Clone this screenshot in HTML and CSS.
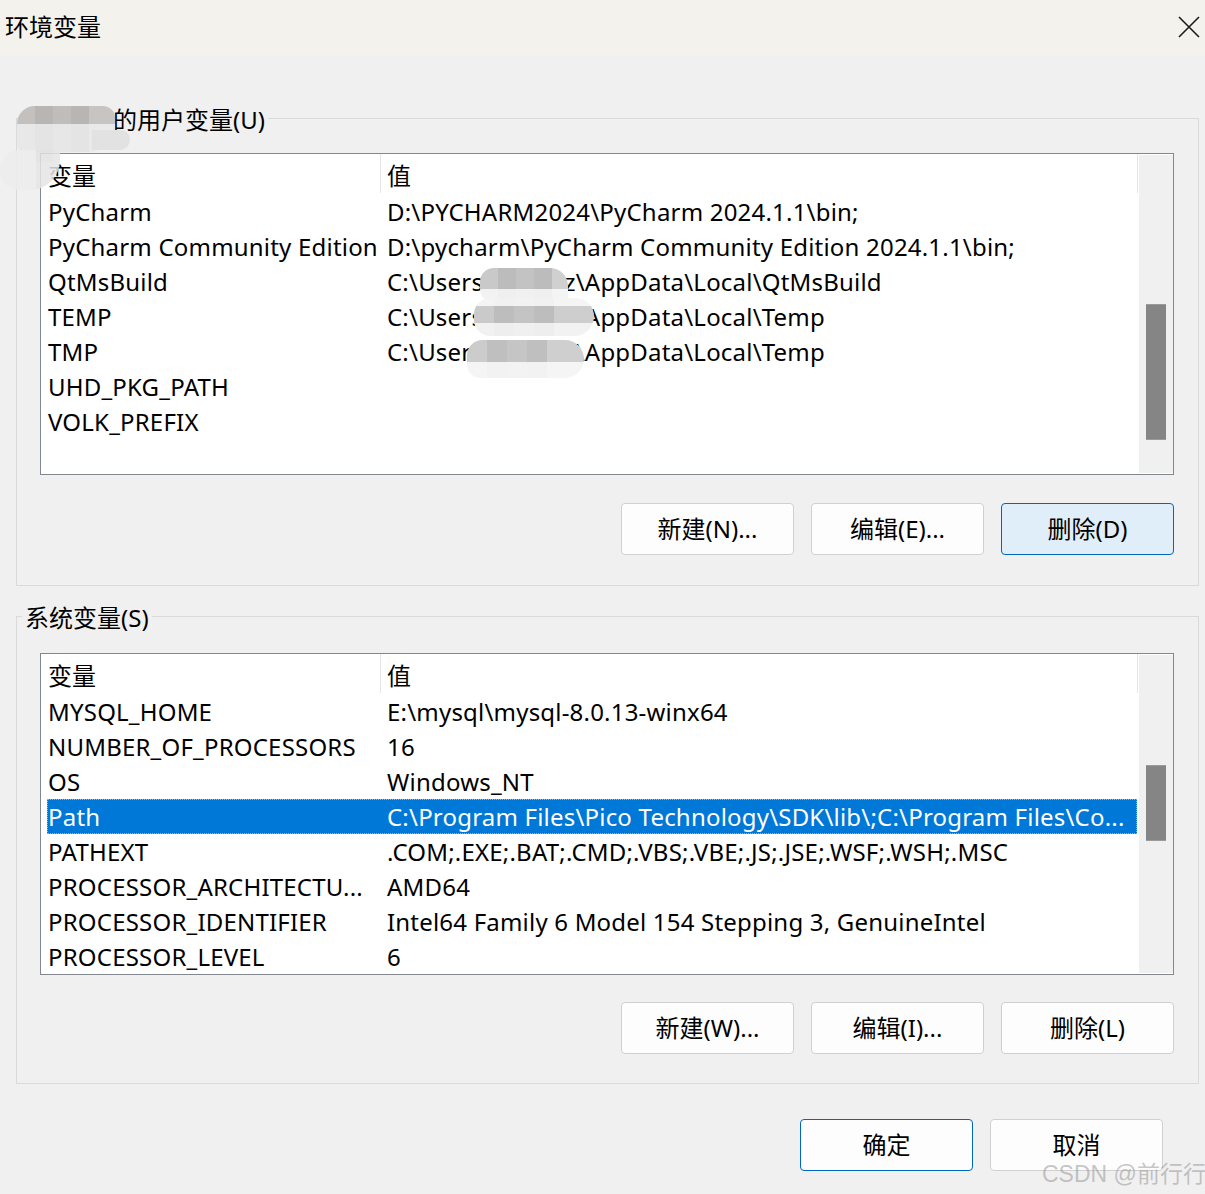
FILE: index.html
```html
<!DOCTYPE html>
<html lang="zh-CN">
<head>
<meta charset="utf-8">
<title>环境变量</title>
<link rel="stylesheet" href="styles.css">
</head>
<body>
<div class="window">
  <div class="titlebar">
    <span class="title">环境变量</span>
    <svg class="close" width="22" height="22" viewBox="0 0 22 22"><path d="M1 1 L21 21 M21 1 L1 21" stroke="#1b1b1b" stroke-width="1.6" fill="none"/></svg>
  </div>

  <div class="content">
    <fieldset class="group g1">
      <legend><span class="uname"></span>的用户变量(U)</legend>
      <div class="list">
        <div class="table">
          <div class="head"><div class="hc h1">变量</div><div class="hc h2">值</div></div>
          <div class="row"><div class="c1">PyCharm</div><div class="c2">D:\PYCHARM2024\PyCharm 2024.1.1\bin;</div></div>
          <div class="row"><div class="c1">PyCharm Community Edition</div><div class="c2">D:\pycharm\PyCharm Community Edition 2024.1.1\bin;</div></div>
          <div class="row"><div class="c1">QtMsBuild</div><div class="c2">C:\Users\<span class="nm"></span>z\AppData\Local\QtMsBuild</div></div>
          <div class="row"><div class="c1">TEMP</div><div class="c2">C:\Users\<span class="nm"></span>z\AppData\Local\Temp</div></div>
          <div class="row"><div class="c1">TMP</div><div class="c2">C:\Users\<span class="nm"></span>z\AppData\Local\Temp</div></div>
          <div class="row"><div class="c1">UHD_PKG_PATH</div><div class="c2"></div></div>
          <div class="row"><div class="c1">VOLK_PREFIX</div><div class="c2"></div></div>
        </div>
        <div class="scroll"><div class="thumb t1"></div></div>
      </div>
      <div class="btns">
        <button class="btn">新建(N)...</button>
        <button class="btn">编辑(E)...</button>
        <button class="btn hot">删除(D)</button>
      </div>
    </fieldset>

    <fieldset class="group g2">
      <legend>系统变量(S)</legend>
      <div class="list">
        <div class="table">
          <div class="head"><div class="hc h1">变量</div><div class="hc h2">值</div></div>
          <div class="row"><div class="c1">MYSQL_HOME</div><div class="c2">E:\mysql\mysql-8.0.13-winx64</div></div>
          <div class="row"><div class="c1">NUMBER_OF_PROCESSORS</div><div class="c2">16</div></div>
          <div class="row"><div class="c1">OS</div><div class="c2">Windows_NT</div></div>
          <div class="row sel"><div class="c1">Path</div><div class="c2">C:\Program Files\Pico Technology\SDK\lib\;C:\Program Files\Co...</div></div>
          <div class="row"><div class="c1">PATHEXT</div><div class="c2">.COM;.EXE;.BAT;.CMD;.VBS;.VBE;.JS;.JSE;.WSF;.WSH;.MSC</div></div>
          <div class="row"><div class="c1">PROCESSOR_ARCHITECTU...</div><div class="c2">AMD64</div></div>
          <div class="row"><div class="c1">PROCESSOR_IDENTIFIER</div><div class="c2">Intel64 Family 6 Model 154 Stepping 3, GenuineIntel</div></div>
          <div class="row"><div class="c1">PROCESSOR_LEVEL</div><div class="c2">6</div></div>
        </div>
        <div class="scroll"><div class="thumb t2"></div></div>
      </div>
      <div class="btns">
        <button class="btn">新建(W)...</button>
        <button class="btn">编辑(I)...</button>
        <button class="btn">删除(L)</button>
      </div>
    </fieldset>

    <div class="footer">
      <button class="btn def">确定</button>
      <button class="btn">取消</button>
    </div>
  </div>

  <div class="mosaic m1"></div>
  <div class="mosaic m1c"></div>
  <div class="mosaic m1b"></div>
  <div class="mosaic m2"></div>
  <div class="mosaic m3"></div>
  <div class="mosaic m4"></div>
  <div class="watermark">CSDN @前行行</div>
</div>
</body>
</html>
```

FILE: styles.css
```css
* { box-sizing: border-box; }
html, body { margin: 0; padding: 0; }
body {
  background: #f0f0f0;
  font-family: "Noto Sans", "Noto Sans CJK SC", sans-serif;
  font-size: 24px;
  color: #000;
}
.window {
  position: relative;
  width: 1205px;
  height: 1194px;
  overflow: hidden;
  background: #f0f0f0;
}
.titlebar {
  height: 56px;
  background: #f3f2ec;
  display: flex;
  align-items: center;
  justify-content: space-between;
  padding: 0 5px 0 5px;
}
.title { font-size: 24px; line-height: 32px; margin-top: -2px; }
.close { margin-right: 0; margin-top: -2px; }

.content { padding: 0 0 0 16px; }

.group {
  width: 1183px;
  margin: 0;
  border: 1px solid #dadada;
  padding: 17px 25px 30px 23px;
  min-width: 0;
}
.g1 { margin-top: 44px; }
.g2 { margin-top: 13px; padding-top: 19px; padding-bottom: 29px; }
.group legend {
  padding: 4px 3px 0 3px;
  margin-left: -18px;
  line-height: 32px;
  font-size: 24px;
}
.g2 legend { padding-top: 3px; }
.uname { display: inline-block; width: 88px; }

.list {
  width: 1134px;
  height: 322px;
  border: 1px solid #828790;
  background: #fff;
  display: flex;
}
.table { width: 1098px; padding-top: 0; }
.head { display: flex; height: 40px; }
.hc {
  height: 39px;
  border-right: 1px solid #e5e5e5;
  padding-top: 4px;
  line-height: 35px;
  white-space: nowrap;
}
.h1 { width: 340px; padding-left: 7px; }
.h2 { width: 757px; padding-left: 6px; }

.row {
  display: flex;
  width: 1090px;
  margin-left: 6px;
  height: 35px;
  line-height: 35px;
  white-space: nowrap;
  letter-spacing: 0.2px;
}
.row .c1 { width: 333px; padding-left: 1px; overflow: hidden; }
.row .c2 { flex: 1; padding-left: 7px; overflow: hidden; }
.nm { display: inline-block; width: 72px; }
.row.sel {
  background: #0078d7;
  color: #fff;
  outline: 1px dotted #f3a23a;
  outline-offset: -1px;
}

.scroll {
  width: 34px;
  margin: 1px 0 1px 0;
  background: #f0f0f0;
  display: flex;
  flex-direction: column;
  align-items: flex-start;
}
.thumb {
  width: 20px;
  margin-left: 7px;
  background: #858585;
  border-top: 1px solid #9a9a9a;
  border-bottom: 1px solid #9a9a9a;
}
.t1 { margin-top: 149px; height: 136px; }
.t2 { margin-top: 110px; height: 76px; }

.btns {
  display: flex;
  justify-content: flex-end;
  gap: 17px;
  margin-top: 28px;
  margin-right: -1px;
}
.g2 .btns { margin-top: 27px; }
.btn {
  width: 173px;
  height: 52px;
  border: 1px solid #d0d0d0;
  border-radius: 4px;
  background: #fdfdfd;
  font-family: "Noto Sans", "Noto Sans CJK SC", sans-serif;
  font-size: 24px;
  color: #000;
  padding: 0;
  line-height: 50px;
}
.btn.hot { background: #e0eef9; border-color: #0067c0; }
.btn.def { background: #fdfdfd; border-color: #0067c0; }

.footer {
  display: flex;
  justify-content: flex-end;
  gap: 17px;
  margin-top: 35px;
  padding-right: 42px;
}

.mosaic { position: absolute; }
.m1 {
  left: 17px; top: 106px; width: 98px; height: 46px;
  border-radius: 18px 12px 26px 8px;
  background:
    linear-gradient(to right, rgba(255,255,255,0.15) 0 18px, transparent 18px 36px, rgba(255,255,255,0.1) 36px 54px, transparent 54px 72px, rgba(255,255,255,0.2) 72px),
    linear-gradient(to bottom, #b9b5b3 0 18px, #e4e4e4 18px);
}
.m1c {
  left: 92px; top: 130px; width: 38px; height: 20px;
  border-radius: 0 14px 16px 0;
  background: #e2e2e3;
}
.m1b {
  left: 0px; top: 150px; width: 60px; height: 40px;
  border-radius: 20px 0 30px 20px;
  background:
    linear-gradient(to right, transparent 0 36px, #e2e2e2 36px 53px, transparent 53px) top / 100% 12px no-repeat,
    linear-gradient(to right, #ededed 0 36px, #e6e6e6 36px);
  opacity: 0.85;
}
.m2 {
  left: 480px; top: 268px; width: 88px; height: 36px;
  border-radius: 14px 18px 6px 16px;
  background:
    linear-gradient(to right, rgba(255,255,255,0.2) 0 18px, transparent 18px 36px, rgba(255,255,255,0.1) 36px 54px, transparent 54px 72px, rgba(255,255,255,0.3) 72px),
    linear-gradient(to bottom, #bcbcbc 0 21px, #efefef 21px);
}
.m3 {
  left: 474px; top: 298px; width: 120px; height: 38px;
  border-radius: 18px 20px 22px 18px;
  background:
    linear-gradient(to right, rgba(255,255,255,0.2) 0 20px, transparent 20px 40px, rgba(255,255,255,0.1) 40px 60px, transparent 60px 80px, rgba(255,255,255,0.25) 80px),
    linear-gradient(to bottom, #f1f1f1 0 8px, #bdbdbd 8px 25px, #eeeeee 25px);
}
.m4 {
  left: 467px; top: 340px; width: 117px; height: 38px;
  border-radius: 18px 22px 22px 16px;
  background:
    linear-gradient(to right, rgba(255,255,255,0.2) 0 20px, transparent 20px 40px, rgba(255,255,255,0.1) 40px 60px, transparent 60px 80px, rgba(255,255,255,0.25) 80px),
    linear-gradient(to bottom, #bfbfbf 0 22px, #f2f2f2 22px);
}
.watermark {
  position: absolute;
  left: 1042px;
  top: 1158px;
  font-family: "Liberation Sans", "Noto Sans CJK SC", sans-serif;
  font-size: 23px;
  line-height: 32px;
  color: rgba(150,150,150,0.55);
  white-space: nowrap;
}
```
